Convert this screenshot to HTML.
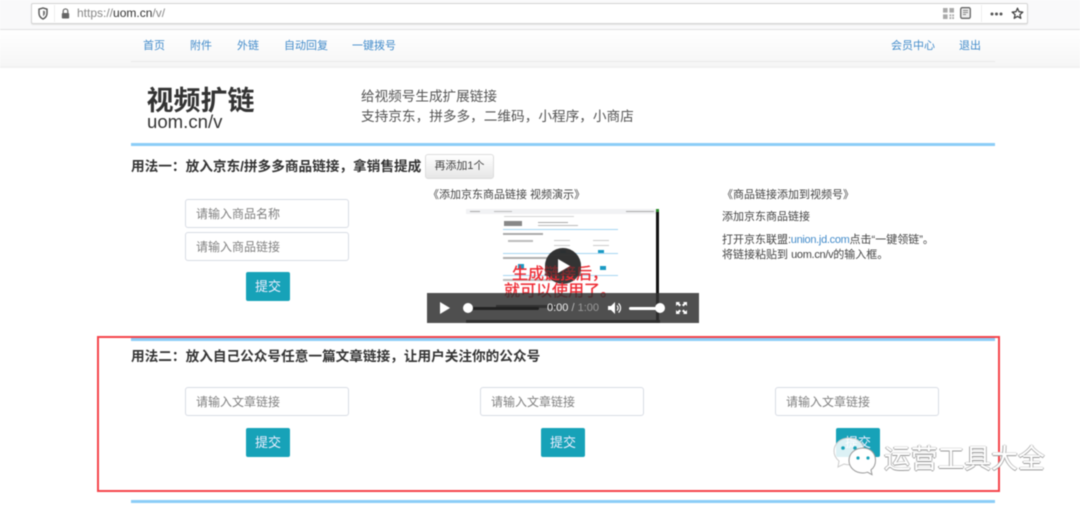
<!DOCTYPE html>
<html lang="zh"><head><meta charset="utf-8"><title>视频扩链</title>
<style>
html,body{margin:0;padding:0;background:#fff}
#p{position:relative;width:1080px;height:506px;overflow:hidden;background:#fff;font-family:"Liberation Sans","Noto Sans CJK SC",sans-serif;color:#333;filter:blur(.45px)}
#p div,#p a,#p svg{position:absolute;display:block}
.t{white-space:nowrap;line-height:1}
.nav{font-size:11px;color:#428bca;top:41px}
.in{box-sizing:border-box;width:164px;height:29px;border:1px solid #d8dce4;border-radius:3px;background:#fff;color:#808080;font-size:12px;line-height:29px;padding-left:10px;white-space:nowrap}
.btn{width:44px;height:29px;background:#17a2b8;border-radius:2px;color:#eef;font-size:13px;line-height:29px;text-align:center}
.bl{left:131px;width:864px;height:3px;background:#8ccdf7}
.s{font-size:11px;color:#444}
.l{letter-spacing:-.3px}
.h{font-size:13.650px;font-weight:bold;color:#333}
.r{font-size:16px;color:#ee2a33;-webkit-text-stroke:.3px #ee2a33}
.w{font-size:26.800px;color:#fff;text-shadow:-1px 0 0 #aaa,0 1px 0 #999,1px 0 0 #bbb,0 -1px 0 #e5e5e5}
</style></head><body><div id="p">
<div style="left:0;top:0;width:1080px;height:29px;background:#f9f9fa"></div>
<div style="left:0;top:29px;width:1080px;height:1px;background:#e2e2e2"></div>
<div style="left:31px;top:3px;width:997px;height:21px;box-sizing:border-box;background:#fff;border:1px solid #d4d4d4;border-radius:2px;box-shadow:0 1px 1px #e5e5e5"></div>
<svg style="left:37px;top:7px" width="12" height="13" viewBox="0 0 12 13"><path d="M2 2.200 6 1l4 1.200v4C10 9 8 11 6 12 4 11 2 9 2 6.200z" fill="#fff" stroke="#555" stroke-width="1.400"/><path d="M6 3.500 8 4.200v2C8 7.500 7 8.700 6 9.300z" fill="#777"/></svg>
<div style="left:54px;top:5px;width:1px;height:17px;background:#eee"></div>
<svg style="left:60px;top:7px" width="11" height="13" viewBox="0 0 12 13"><path d="M3.500 6V4a2.500 2.500 0 0 1 5 0v2" fill="none" stroke="#666" stroke-width="1.300"/><rect x="2" y="6" width="8" height="6" rx="1" fill="#666"/></svg>
<div class="t" style="left:77px;top:7px;font-size:12px;color:#888">https://<span style="color:#333">uom.cn</span>/v/</div>
<svg style="left:943px;top:8px" width="11" height="11" viewBox="0 0 12 12" fill="#aaa"><path d="M0 0h5v5H0zM7 0h5v5H7zM0 7h5v5H0zM7 7h2v2H7zM10 7h2v2h-2zM7 10h2v2H7zM10 10h2v2h-2z"/></svg>
<svg style="left:960px;top:7px" width="11" height="12" viewBox="0 0 11 12"><rect x=".7" y=".7" width="9.600" height="10.600" rx="1.500" fill="#eee" stroke="#666" stroke-width="1.300"/><path d="M3 3h5v1H3zM3 5h5v1H3zM3 7h3v1H3z" fill="#888"/></svg>
<div style="left:981px;top:5px;width:1px;height:17px;background:#eee"></div>
<svg style="left:990px;top:12px" width="13" height="4" viewBox="0 0 13 4" fill="#555"><circle cx="2" cy="2" r="1.500"/><circle cx="6.500" cy="2" r="1.500"/><circle cx="11" cy="2" r="1.500"/></svg>
<svg style="left:1011px;top:7px" width="13" height="13" viewBox="0 0 13 13"><path d="M6.500 1.200 8 4.700l3.800.4-2.900 2.500.9 3.700-3.300-2-3.300 2 .9-3.700L1.200 5.100 5 4.700z" fill="#fff" stroke="#444" stroke-width="1.300" stroke-linejoin="round"/></svg>

<div style="left:0;top:30px;width:1080px;height:36px;background:linear-gradient(#fff,#f6f6f6)"></div>
<div style="left:131px;top:61px;width:864px;height:1px;background:#e9e9e9"></div>
<div style="left:0;top:66px;width:1080px;height:2px;background:#f1f1f1"></div>
<a class="t nav" style="left:143px">首页</a>
<a class="t nav" style="left:190px">附件</a>
<a class="t nav" style="left:237px">外链</a>
<a class="t nav" style="left:284px">自动回复</a>
<a class="t nav" style="left:352px">一键拨号</a>
<a class="t nav" style="left:891px">会员中心</a>
<a class="t nav" style="left:959px">退出</a>

<div class="t" style="left:146.500px;top:88px;font-size:27px;font-weight:bold;color:#333">视频扩链</div>
<div class="t" style="left:147px;top:113px;font-size:18.600px;color:#333">uom.cn/v</div>
<div class="t" style="left:361px;top:90px;font-size:13.600px;color:#555">给视频号生成扩展链接</div>
<div class="t" style="left:361px;top:110px;font-size:13.650px;color:#555">支持京东&#xFF0C;拼多多&#xFF0C;二维码&#xFF0C;小程序&#xFF0C;小商店</div>
<div class="bl" style="top:143px"></div>

<div class="t h" style="left:131px;top:160px">用法一&#xFF1A;放入京东/拼多多商品链接&#xFF0C;拿销售提成</div>
<div style="left:425px;top:154px;width:69px;height:25px;box-sizing:border-box;border:1px solid #ddd;border-radius:3px;background:linear-gradient(#fff,#e6e6e6);font-size:11px;line-height:23px;text-align:center;color:#444">再添加1个</div>

<div class="in" style="left:185px;top:199px">请输入商品名称</div>
<div class="in" style="left:185px;top:232px">请输入商品链接</div>
<div class="btn" style="left:246px;top:272px">提交</div>

<div class="t s" style="left:428px;top:190px">《添加京东商品链接 视频演示》</div>
<div style="left:466px;top:209px;width:194px;height:114px;background:#fff;overflow:hidden">
<div style="left:0;top:0;width:191px;height:5px;background:#f1f2f4"></div>
<div style="left:4px;top:2px;width:10px;height:1px;background:#aaa"></div>
<div style="left:28px;top:2px;width:18px;height:1px;background:#bbb"></div>
<div style="left:160px;top:2px;width:28px;height:1px;background:#aaa"></div>
<div style="left:38px;top:7px;width:70px;height:1px;background:#d5d5d5"></div>
<div style="left:38px;top:12px;width:18px;height:5px;background:#888"></div>
<div style="left:72px;top:13px;width:30px;height:1px;background:#aaa"></div>
<div style="left:72px;top:16px;width:40px;height:1px;background:#bbb"></div>
<div style="left:37px;top:20px;width:115px;height:1px;background:#a6d6f2"></div>
<div style="left:37px;top:24px;width:40px;height:2px;background:#aaa"></div>
<div style="left:42px;top:31px;width:25px;height:2px;background:#bbb"></div>
<div style="left:88px;top:31px;width:16px;height:1px;background:#ccc"></div>
<div style="left:127px;top:31px;width:16px;height:1px;background:#ccc"></div>
<div style="left:88px;top:36px;width:16px;height:1px;background:#ccc"></div>
<div style="left:127px;top:36px;width:16px;height:1px;background:#ccc"></div>
<div style="left:94px;top:41px;width:6px;height:3px;background:#1b9ac4"></div>
<div style="left:132px;top:41px;width:6px;height:4px;background:#1b9ac4"></div>
<div style="left:37px;top:44px;width:115px;height:1px;background:#a6d6f2"></div>
<div style="left:37px;top:48px;width:75px;height:2px;background:#b0b0b0"></div>
<div style="left:52px;top:55px;width:6px;height:5px;background:#1b9ac4"></div>
<div style="left:92px;top:55px;width:6px;height:5px;background:#1b9ac4"></div>
<div style="left:134px;top:57px;width:6px;height:4px;background:#1b9ac4"></div>
<div style="left:37px;top:66px;width:115px;height:1px;background:#a6d6f2"></div>
<div style="left:37px;top:70px;width:60px;height:2px;background:#bbb"></div>
<div style="left:30px;top:96px;width:60px;height:3px;background:#333"></div>
<div style="left:0;top:111px;width:194px;height:3px;background:#222"></div>
<div style="left:190px;top:0;width:3px;height:114px;background:#111"></div>
<div style="left:190px;top:0;width:3px;height:3px;background:#2a8a2a"></div>
</div>
<div style="left:545px;top:248px;width:36px;height:36px;border-radius:50%;background:rgba(45,45,45,.92)"></div>
<div class="t r" style="left:512px;top:267px">生成链接后&#xFF0C;</div>
<div class="t r" style="left:504px;top:284px">就可以使用了&#x3002;</div>
<div style="left:545px;top:248px;width:36px;height:28px;border-radius:18px 18px 0 0;background:rgba(45,45,45,.6)"></div>
<svg style="left:557px;top:258px" width="14" height="16" viewBox="0 0 14 16"><path d="M1 1 13 8 1 15z" fill="#fff"/></svg>
<div style="left:427px;top:293px;width:272px;height:30px;background:rgba(50,50,50,.86)"></div>
<svg style="left:440px;top:302px" width="11" height="12" viewBox="0 0 11 12"><path d="M0 0 10 6 0 12z" fill="#fff"/></svg>
<div style="left:467px;top:307px;width:72px;height:3px;background:#222;border-radius:2px"></div>
<div style="left:463px;top:303px;width:10px;height:10px;border-radius:50%;background:#fff"></div>
<div class="t" style="left:547px;top:303px;font-size:11px;color:#eee">0:00 <span style="color:#bbb">/</span> <span style="color:#999">1:00</span></div>
<svg style="left:608px;top:302px" width="14" height="12" viewBox="0 0 14 12"><path d="M0 4h3l4-4v12L3 8H0z" fill="#fff"/><path d="M9 3.500a3.500 3.500 0 0 1 0 5M10.500 1.500a6 6 0 0 1 0 9" fill="none" stroke="#fff" stroke-width="1.200"/></svg>
<div style="left:629px;top:307px;width:30px;height:3px;background:#fff;border-radius:2px"></div>
<div style="left:655px;top:303px;width:10px;height:10px;border-radius:50%;background:#fff"></div>
<svg style="left:676px;top:302px" width="11" height="12" viewBox="0 0 11 12" fill="#fff"><path d="M0 0h4L3 1l2 2-1.500 1.500-2-2L0 4zM11 0H7l1 1-2 2 1.500 1.500 2-2L11 4zM0 12h4L3 11l2-2-1.500-1.500-2 2L0 8zM11 12H7l1-1-2-2 1.500-1.500 2 2L11 8z"/></svg>

<div class="t s" style="left:722px;top:190px">《商品链接添加到视频号》</div>
<div class="t s" style="left:722px;top:212px">添加京东商品链接</div>
<div class="t s" style="left:722px;top:235px">打开京东联盟<span class="l">:</span><span class="l" style="color:#428bca">union.jd.com</span>点击“一键领链”。</div>
<div class="t s" style="left:722px;top:250px">将链接粘贴到 <span class="l">uom.cn/v</span>的输入框。</div>

<div class="bl" style="top:338px"></div>
<div style="left:97px;top:336px;width:903px;height:156px;box-sizing:border-box;border:2px solid #f5444a"></div>
<div class="t h" style="left:131px;top:350px">用法二&#xFF1A;放入自己公众号任意一篇文章链接&#xFF0C;让用户关注你的公众号</div>

<div class="in" style="left:185px;top:387px">请输入文章链接</div>
<div class="in" style="left:480px;top:387px">请输入文章链接</div>
<div class="in" style="left:775px;top:387px">请输入文章链接</div>
<div class="btn" style="left:246px;top:428px">提交</div>
<div class="btn" style="left:541px;top:428px">提交</div>
<div class="btn" style="left:836px;top:428px">提交</div>
<div class="bl" style="top:500px"></div>

<svg style="left:832px;top:436px" width="48" height="40" viewBox="0 0 48 40">
<path d="M17 2C8 2 2 8 2 15c0 4 2 7.500 5 10l-1 6 6-3c2 .6 3.500.8 5 .8 9 0 15-6 15-13.800S26 2 17 2z" fill="#fff" fill-opacity=".85" stroke="#ccc" stroke-width="1"/>
<circle cx="11" cy="12" r="1.800" fill="#17a2b8"/><circle cx="23" cy="12" r="1.800" fill="#17a2b8"/>
<path d="M31 12c-8 0-14 5.500-14 12.500S23 37 31 37c1.500 0 3-.3 4.500-.8l4.500 2.500-1-4.800c3-2.300 4.500-5.500 4.500-9.400C43.500 17.500 39 12 31 12z" fill="#fff" stroke="#999" stroke-width="1"/>
<circle cx="26" cy="22" r="1.600" fill="#17a2b8"/><circle cx="36" cy="22" r="1.600" fill="#17a2b8"/>
</svg>
<div class="t w" style="left:884px;top:446px">运营工具大全</div>
</div></body></html>
